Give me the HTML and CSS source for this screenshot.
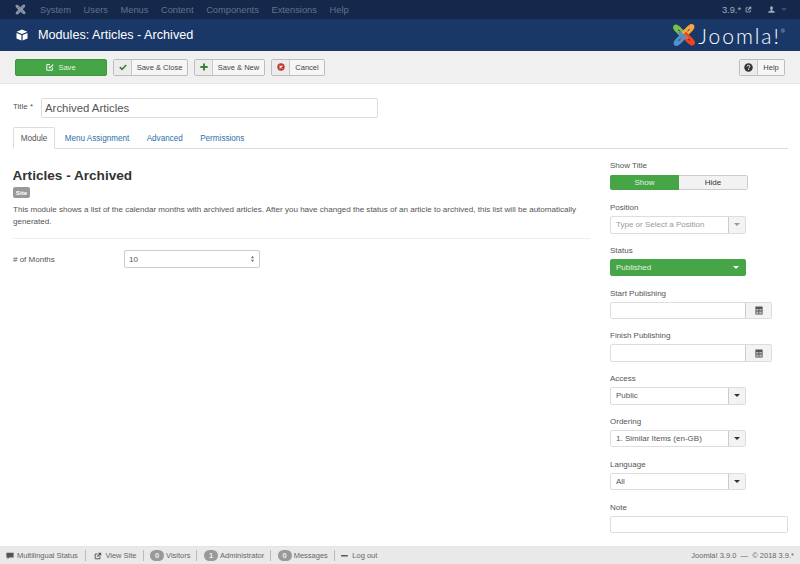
FILE: index.html
```html
<!DOCTYPE html>
<html lang="en">
<head>
<meta charset="utf-8">
<title>Modules: Articles - Archived</title>
<link rel="stylesheet" href="styles.css">
</head>
<body>
<svg class="defs" width="0" height="0" aria-hidden="true">
  <defs>
    <g id="jpiece">
      <circle cx="4" cy="4.5" r="2.9"/>
      <path d="M3.4 6.5 L11 14.2 M6 3.8 L12.2 10 L15.2 7" fill="none" stroke-width="3" stroke="currentColor"/>
    </g>
  </defs>
</svg>
<nav class="topnav">
  <svg class="nav-logo" viewBox="0 0 24 24" fill="currentColor" color="#8b96a8">
    <use href="#jpiece"/>
    <use href="#jpiece" transform="rotate(90 12 12)"/>
    <use href="#jpiece" transform="rotate(180 12 12)"/>
    <use href="#jpiece" transform="rotate(270 12 12)"/>
  </svg>
  <ul class="menu">
    <li>System</li><li>Users</li><li>Menus</li><li>Content</li><li>Components</li><li>Extensions</li><li>Help</li>
  </ul>
  <div class="nav-right">
    <span class="ver">3.9.*
      <svg class="ico-ext" viewBox="0 0 10 10"><path d="M7.5 5.5V8.5H1.5V2.5H4.5" fill="none" stroke="currentColor" stroke-width="1.2"/><path d="M5 1H9V5L7.6 3.6 4.8 6.4 3.6 5.2 6.4 2.4Z" fill="currentColor"/></svg>
    </span>
    <svg class="ico-user" viewBox="0 0 10 10"><path d="M5 0.5C6.4 0.5 7 1.6 7 3C7 4.2 6.5 5.2 6 5.5V6.4L9.5 7.8V9.5H.5V7.8L4 6.4V5.5C3.5 5.2 3 4.2 3 3C3 1.6 3.6 0.5 5 0.5Z" fill="currentColor"/></svg>
    <span class="caret caret-nav"></span>
  </div>
</nav>
<header class="head">
  <svg class="ico-cube" viewBox="0 0 12 12"><path d="M6 .6 11.4 2.8 6 5 .6 2.8Z M.5 3.9 5.4 6V11.6L.5 9.5Z M11.5 3.9V9.5L6.6 11.6V6Z" fill="#fff"/></svg>
  <h1>Modules: Articles - Archived</h1>
  <div class="brand">
    <svg class="brand-logo" viewBox="0 0 24 24">
      <use href="#jpiece" fill="#7ac143" color="#7ac143"/>
      <use href="#jpiece" fill="#f9a541" color="#f9a541" transform="rotate(90 12 12)"/>
      <use href="#jpiece" fill="#f44321" color="#f44321" transform="rotate(180 12 12)"/>
      <use href="#jpiece" fill="#5091cd" color="#5091cd" transform="rotate(270 12 12)"/>
    </svg>
    <span class="brand-text">Joomla!<sup>®</sup></span>
  </div>
</header>
<div class="toolbar">
  <button class="btn btn-save">
    <svg class="ico-sm" viewBox="0 0 10 10"><path d="M8 5.5V9H1V2H5" fill="none" stroke="#fff" stroke-width="1.2"/><path d="M3.5 4.5 5 6 9 2" fill="none" stroke="#fff" stroke-width="1.4"/></svg>
    Save
  </button>
  <button class="btn btn-split w-close">
    <span class="btn-ico"><svg class="ico-sm" viewBox="0 0 10 10"><path d="M1 5.2 3.8 8 9 2.4" fill="none" stroke="#378137" stroke-width="2"/></svg></span>
    <span class="btn-txt">Save &amp; Close</span>
  </button>
  <button class="btn btn-split w-new">
    <span class="btn-ico"><svg class="ico-sm" viewBox="0 0 10 10"><path d="M5 .5V9.5M.5 5H9.5" fill="none" stroke="#378137" stroke-width="2.4"/></svg></span>
    <span class="btn-txt">Save &amp; New</span>
  </button>
  <button class="btn btn-split w-cancel">
    <span class="btn-ico"><svg class="ico-sm" viewBox="0 0 10 10"><circle cx="5" cy="5" r="4.6" fill="#bd362f"/><path d="M3.2 3.2 6.8 6.8M6.8 3.2 3.2 6.8" stroke="#fff" stroke-width="1.4"/></svg></span>
    <span class="btn-txt">Cancel</span>
  </button>
  <button class="btn btn-split w-help">
    <span class="btn-ico"><svg class="ico-sm" viewBox="0 0 10 10"><circle cx="5" cy="5" r="4.7" fill="#333"/><path d="M3.4 3.9C3.5 2.9 4.2 2.5 5 2.5 6 2.5 6.6 3.1 6.6 3.8 6.6 4.9 5.1 4.9 5.1 6" fill="none" stroke="#fff" stroke-width="1.1"/><rect x="4.5" y="6.6" width="1.2" height="1.1" fill="#fff"/></svg></span>
    <span class="btn-txt">Help</span>
  </button>
</div>
<main class="content">
  <div class="title-row">
    <label class="title-label">Title *</label>
    <div class="title-input">Archived Articles</div>
  </div>
  <div class="tabs">
    <span class="tab active">Module</span>
    <span class="tab">Menu Assignment</span>
    <span class="tab">Advanced</span>
    <span class="tab">Permissions</span>
  </div>
  <div class="columns">
    <section class="left">
      <h2>Articles - Archived</h2>
      <span class="site-label">Site</span>
      <p class="desc">This module shows a list of the calendar months with archived articles. After you have changed the status of an article to archived, this list will be automatically generated.</p>
      <hr class="rule">
      <div class="param">
        <label class="param-label"># of Months</label>
        <div class="num-input">10
          <svg class="spin" viewBox="0 0 6 10"><path d="M3 1 5 4H1Z M3 9 1 6H5Z" fill="#777"/></svg>
        </div>
      </div>
    </section>
    <aside class="right">
      <div class="field first">
        <label>Show Title</label>
        <div class="toggle"><span class="on">Show</span><span class="off">Hide</span></div>
      </div>
      <div class="field">
        <label>Position</label>
        <div class="ctl w-select"><span class="val ph">Type or Select a Position</span><span class="addon"><span class="caret faint"></span></span></div>
      </div>
      <div class="field">
        <label>Status</label>
        <div class="ctl w-select green"><span class="val">Published</span><span class="caret white"></span></div>
      </div>
      <div class="field">
        <label>Start Publishing</label>
        <div class="ctl w-date"><span class="val"></span><span class="addon date-addon"><svg class="ico-cal" viewBox="0 0 10 11"><path d="M.5 .5H9.5V10.5H.5Z" fill="#555"/><path d="M1.5 3.5H4.4V5.6H1.5ZM5.4 3.5H8.5V5.6H5.4ZM1.5 6.6H4.4V9.5H1.5ZM5.4 6.6H8.5V9.5H5.4Z" fill="#bbb"/></svg></span></div>
      </div>
      <div class="field">
        <label>Finish Publishing</label>
        <div class="ctl w-date"><span class="val"></span><span class="addon date-addon"><svg class="ico-cal" viewBox="0 0 10 11"><path d="M.5 .5H9.5V10.5H.5Z" fill="#555"/><path d="M1.5 3.5H4.4V5.6H1.5ZM5.4 3.5H8.5V5.6H5.4ZM1.5 6.6H4.4V9.5H1.5ZM5.4 6.6H8.5V9.5H5.4Z" fill="#bbb"/></svg></span></div>
      </div>
      <div class="field">
        <label>Access</label>
        <div class="ctl w-select"><span class="val">Public</span><span class="addon"><span class="caret"></span></span></div>
      </div>
      <div class="field">
        <label>Ordering</label>
        <div class="ctl w-select"><span class="val">1. Similar Items (en-GB)</span><span class="addon"><span class="caret"></span></span></div>
      </div>
      <div class="field">
        <label>Language</label>
        <div class="ctl w-select"><span class="val">All</span><span class="addon"><span class="caret"></span></span></div>
      </div>
      <div class="field">
        <label>Note</label>
        <div class="ctl w-full"><span class="val"></span></div>
      </div>
    </aside>
  </div>
</main>
<footer class="status">
  <div class="st-item"><svg class="ico-st" viewBox="0 0 10 10"><path d="M.5 1H9.5V7H4L2 9V7H.5Z" fill="#555"/></svg>Multilingual Status</div>
  <div class="st-item"><svg class="ico-st" viewBox="0 0 10 10"><path d="M7.5 5.5V8.5H1.5V2.5H4.5" fill="none" stroke="#555" stroke-width="1.2"/><path d="M5 1H9V5L7.6 3.6 4.8 6.4 3.6 5.2 6.4 2.4Z" fill="#555"/></svg>View Site</div>
  <div class="st-item"><span class="badge">0</span>Visitors</div>
  <div class="st-item"><span class="badge">1</span>Administrator</div>
  <div class="st-item"><span class="badge">0</span>Messages</div>
  <div class="st-item"><svg class="ico-st" viewBox="0 0 10 10"><rect y="3.8" width="8.5" height="1.8" fill="#555"/></svg>Log out</div>
  <div class="copy">Joomla! 3.9.0 &nbsp;—&nbsp; © 2018 3.9.*</div>
</footer>
</body>
</html>
```
FILE: styles.css
```css
* { box-sizing: border-box; }
html, body { margin: 0; height: 564px; overflow: hidden; }
body {
  width: 800px;
  display: flex;
  flex-direction: column;
  font-family: "Liberation Sans", Arial, sans-serif;
  font-size: 8px;
  color: #555;
  background: #fff;
}
.defs { position: absolute; }
.topnav {
  height: 19px;
  flex: none;
  display: flex;
  align-items: center;
  padding: 0 13px 0 15px;
  background: #14284b;
  color: #64718a;
}
.nav-logo { width: 11px; height: 11px; flex: none; }
.menu {
  list-style: none;
  display: flex;
  gap: 12.6px;
  margin: 0 0 0 14px;
  padding: 0;
  font-size: 9.3px;
}
.nav-right { margin-left: auto; display: flex; align-items: center; color: #a4adbb; font-size: 9.3px; }
.ver { display: flex; align-items: center; gap: 4px; }
.ico-ext { width: 7px; height: 7px; }
.ico-user { width: 7px; height: 7px; margin-left: 16px; }
.caret {
  display: block;
  width: 0; height: 0;
  border-left: 3px solid transparent;
  border-right: 3px solid transparent;
  border-top: 3px solid #333;
}
.caret-nav { margin-left: 6px; border-top-color: #3d4c66; }
.caret.faint { border-top-color: #999; }
.caret.white { border-top-color: #fff; margin-right: 6px; }
.head {
  height: 32px;
  flex: none;
  display: flex;
  align-items: center;
  padding: 0 15px 0 16px;
  background: #1a3867;
  color: #fff;
}
.ico-cube { width: 12px; height: 12px; flex: none; }
h1 { margin: 0 0 0 10px; font-size: 12.65px; font-weight: 400; }
.brand { margin-left: auto; display: flex; align-items: center; gap: 2px; }
.brand-logo { width: 24px; height: 24px; }
.brand-text { margin-top: 2px; font-family: Lato, sans-serif; font-weight: 300; font-size: 21px; letter-spacing: 1.95px; line-height: 24px; color: #fff; }
.brand-text sup { font-size: 5px; vertical-align: 11px; line-height: 0; letter-spacing: 0; }
.toolbar {
  height: 33px;
  flex: none;
  display: flex;
  align-items: center;
  gap: 6px;
  padding: 0 15px;
  background: #f0f0f0;
  border-bottom: 1px solid #e6e6e6;
}
.btn {
  height: 17px;
  padding: 0;
  display: flex;
  align-items: center;
  font: inherit;
  font-size: 7.55px;
  color: #444;
  background: #f6f6f6;
  border: 1px solid #bdbdbd;
  border-radius: 2px;
}
.btn-save {
  width: 92px;
  justify-content: center;
  gap: 4px;
  color: #e3f2e3;
  background: #46a546;
  border-color: #3c963c;
}
.ico-sm { width: 8px; height: 8px; display: block; }
.btn-ico {
  width: 18px;
  height: 100%;
  flex: none;
  display: flex;
  align-items: center;
  justify-content: center;
  background: #ececec;
  border-right: 1px solid #c8c8c8;
}
.btn-txt { flex: 1; text-align: center; }
.w-close { width: 75px; }
.w-new { width: 71px; }
.w-cancel { width: 54px; }
.w-help { width: 46px; margin-left: auto; }
.w-help .ico-sm { width: 9px; height: 9px; }
.content {
  flex: 1;
  min-height: 0;
  padding: 14px 12px 0 13px;
}
.title-row { display: flex; align-items: center; height: 20px; }
.title-label { width: 28px; margin-top: -3px; }
.title-input {
  width: 337px;
  height: 20px;
  padding: 0 3px;
  line-height: 18px;
  font-size: 11.4px;
  color: #555;
  border: 1px solid #ddd;
  border-radius: 2px;
}
.tabs {
  display: flex;
  height: 22px;
  margin-top: 9px;
  border-bottom: 1px solid #ddd;
  font-size: 8.15px;
  color: #2c6fad;
}
.tab { height: 22px; padding: 0 8.7px; line-height: 23px; }
.tab.active {
  width: 42px;
  margin-right: 1px;
  padding: 0;
  line-height: 21px;
  text-align: center;
  color: #555;
  background: #fff;
  border: 1px solid #ddd;
  border-bottom-color: #fff;
  border-radius: 2px 2px 0 0;
}
.columns { display: flex; }
.left { width: 577px; flex: none; padding-top: 18px; }
h2 { margin: 0 0 0 -0.5px; font-size: 13.6px; line-height: 17px; font-weight: 700; color: #333; }
.site-label {
  display: block;
  width: 17px;
  height: 11px;
  margin-top: 3px;
  line-height: 11px;
  text-align: center;
  font-size: 6.2px;
  font-weight: 700;
  color: #fff;
  background: #999;
  border-radius: 2px;
}
.desc { margin: 6px 0 0; line-height: 12px; color: #555; font-size: 8.05px; }
.rule { height: 1px; margin: 10px 0 0; border: 0; background: #eee; }
.param { display: flex; align-items: center; margin-top: 11px; }
.param-label { width: 111px; }
.num-input {
  width: 136px;
  height: 18px;
  padding: 0 4px;
  display: flex;
  align-items: center;
  justify-content: space-between;
  border: 1px solid #ccc;
  border-radius: 2px;
}
.spin { width: 5px; height: 8px; }
.right { width: 178px; flex: none; margin-left: 20px; padding-top: 11px; }
.field { margin-bottom: 11.3px; }
.field.first { margin-bottom: 12px; }
.field label { display: block; height: 12px; line-height: 12px; margin-bottom: 2px; color: #555; }
.field.first label { margin-bottom: 3px; }
.toggle {
  width: 138px;
  height: 15px;
  display: flex;
  line-height: 13px;
  text-align: center;
  border-radius: 2px;
  overflow: hidden;
}
.on { flex: none; width: 69px; line-height: 15px; color: #e3f2e3; background: #46a546; }
.off { flex: 1; color: #333; background: #f2f2f2; border: 1px solid #ccc; border-left: 0; border-radius: 0 2px 2px 0; }
.ctl {
  height: 17.5px;
  display: flex;
  align-items: center;
  border: 1px solid #ddd;
  border-radius: 2px;
  background: #fff;
}
.val { flex: 1; padding: 0 5px; color: #555; }
.val.ph { color: #999; }
.w-select { width: 136px; }
.w-date { width: 162px; }
.w-full { width: 178px; }
.green { color: #fff; background: #46a546; border-color: #46a546; }
.green .val { color: #e3f2e3; }
.addon {
  width: 17px;
  height: 100%;
  flex: none;
  display: flex;
  align-items: center;
  justify-content: center;
  background: #f3f3f3;
  border-left: 1px solid #ccc;
}
.date-addon { width: 26px; }
.ico-cal { width: 8px; height: 9px; }
.status {
  height: 18px;
  flex: none;
  display: flex;
  align-items: center;
  padding: 0 6px;
  background: #e9e9e9;
  border-top: 1px solid #e4e4e4;
  color: #666;
  font-size: 7.5px;
}
.st-item { display: flex; align-items: center; padding-right: 6px; margin-right: 6.5px; height: 11px; border-right: 1px solid #bbb; }
.st-item:first-child { padding-right: 7.5px; margin-right: 8px; }
.st-item:nth-child(6) { border-right: 0; }
.ico-st { width: 8px; height: 8px; margin-right: 3px; flex: none; }
.badge {
  width: 14px;
  height: 11px;
  margin-right: 2px;
  line-height: 11px;
  text-align: center;
  font-weight: 700;
  color: #eee;
  background: #999;
  border-radius: 6px;
}
.copy { margin-left: auto; }
```
